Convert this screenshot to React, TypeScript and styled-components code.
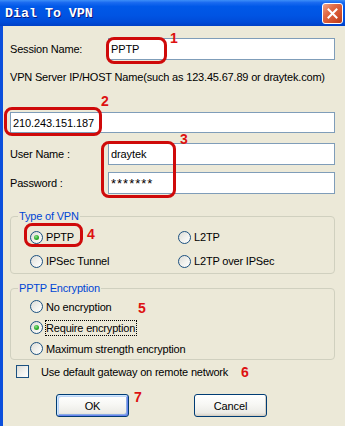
import React from 'react';
import styled, { createGlobalStyle } from 'styled-components';

const GlobalStyle = createGlobalStyle`
    html, body {
        margin: 0;
        padding: 0;
        background: #ece9d8;
    }
    body {
        font-family: 'Liberation Sans', Arial, sans-serif;
        font-size: 11px;
        letter-spacing: -0.18px;
        color: #000;
    }
`;

const Window = styled.div`
    position: relative;
    width: 345px;
    height: 426px;
    display: flex;
    flex-direction: column;
    background: #ece9d8;
    overflow: hidden;
`;

const TitleBar = styled.div`
    flex: none;
    height: 26px;
    box-sizing: border-box;
    padding: 0 2px 0 5px;
    display: flex;
    align-items: center;
    justify-content: space-between;
    background: linear-gradient(
        to bottom,
        #3d8ff8 0%,
        #1a6af0 10%,
        #0058e8 25%,
        #0054e3 60%,
        #004bd8 85%,
        #0040c6 100%
    );
`;

const Title = styled.span`
    font-family: 'Liberation Mono', 'DejaVu Sans Mono', monospace;
    font-weight: bold;
    font-size: 13.3px;
    color: #fff;
    text-shadow: 1px 1px #0a1883;
    letter-spacing: 0;
`;

const CloseButton = styled.div`
    width: 21px;
    height: 21px;
    box-sizing: border-box;
    border: 1px solid #fff;
    border-radius: 3px;
    background: linear-gradient(135deg, #f0a58a 0%, #e26a45 35%, #d2502b 70%, #b83a18 100%);
    display: flex;
    align-items: center;
    justify-content: center;
`;

const Body = styled.div`
    flex: 1;
    display: flex;
    flex-direction: column;
    border-left: 3px solid #0b4fdc;
    padding: 12px 10px 0 7px;
`;

const FieldRow = styled.div<{ $gap: number }>`
    display: flex;
    align-items: center;
    height: 22px;
    margin-top: ${(p) => p.$gap}px;
`;

const FieldLabel = styled.span`
    width: 98px;
    flex: none;
`;

const TextBox = styled.input<{ $h?: number; $masked?: boolean }>`
    flex: 1;
    min-width: 0;
    height: ${(p) => p.$h ?? 22}px;
    box-sizing: border-box;
    margin: 0;
    border: 1px solid #7f9db9;
    background: #fff;
    padding: 0 2px;
    font-family: 'Liberation Sans', Arial, sans-serif;
    font-size: ${(p) => (p.$masked ? 13 : 11)}px;
    letter-spacing: ${(p) => (p.$masked ? '1px' : '-0.1px')};
    color: #000;
    outline: none;
`;

const Hint = styled.div`
    margin-top: 11px;
    line-height: 13px;
`;

const ServerRow = styled.div`
    display: flex;
    margin-top: 28px;
`;

const Group = styled.fieldset<{ $gap: number }>`
    margin: ${(p) => p.$gap}px 0 0 0;
    padding: 0 0 0 7px;
    border: 1px solid #d0d0bf;
    border-radius: 4px;
    min-width: 0;
`;

const Legend = styled.legend`
    padding: 0 1px;
    line-height: 13px;
    color: #0046d5;
`;

const OptionGrid = styled.div<{ $row: number; $cols: string; $top: number }>`
    display: grid;
    grid-template-columns: ${(p) => p.$cols};
    grid-auto-rows: ${(p) => p.$row}px;
    padding: ${(p) => p.$top}px 0 0 12px;
`;

const Option = styled.label`
    display: flex;
    align-items: center;
    gap: 3px;
`;

const RadioCircle = styled.span<{ $on?: boolean }>`
    position: relative;
    flex: none;
    width: 13px;
    height: 13px;
    box-sizing: border-box;
    border-radius: 50%;
    border: 1px solid #1c5180;
    background: linear-gradient(135deg, #dcdcd7 0%, #f2f2ee 55%, #ffffff 100%);

    &::after {
        content: '';
        display: ${(p) => (p.$on ? 'block' : 'none')};
        position: absolute;
        left: 3px;
        top: 3px;
        width: 5px;
        height: 5px;
        border-radius: 50%;
        background: radial-gradient(circle at 40% 35%, #8fe08f 0%, #30b030 50%, #1a8a1a 100%);
    }
`;

const FocusText = styled.span`
    outline: 1px dotted #000;
    outline-offset: 0;
    padding: 1px 1px 1px 0;
`;

const CheckRow = styled.div`
    display: flex;
    align-items: center;
    gap: 12px;
    margin: 5px 0 0 6px;
    height: 13px;
`;

const CheckBox = styled.span`
    flex: none;
    width: 13px;
    height: 13px;
    box-sizing: border-box;
    border: 1px solid #1c5180;
    background: linear-gradient(135deg, #dcdcd7 0%, #f2f2ee 55%, #ffffff 100%);
`;

const ButtonRow = styled.div`
    display: flex;
    gap: 65px;
    margin-top: 16px;
    padding-left: 46px;
`;

const Button = styled.button<{ $default?: boolean }>`
    width: 73px;
    height: 23px;
    box-sizing: border-box;
    margin: 0;
    padding: 0;
    border: 1px solid #003c74;
    border-radius: 3px;
    font-family: 'Liberation Sans', Arial, sans-serif;
    font-size: 11px;
    letter-spacing: -0.1px;
    color: #000;
    background: linear-gradient(to bottom, #ffffff 0%, #f7f7f4 45%, #ecebe6 85%, #d6d0c5 100%);
    box-shadow: ${(p) =>
        p.$default
            ? 'inset 1px 1px 0 #cee7ff, inset -1px -1px 0 #6982ee, inset 2px 2px 0 #bcd4f6, inset -2px -2px 0 #89ade4'
            : 'inset -1px -1px 0 #d6d0c5'};
`;

const Mark = styled.div<{ $x: number; $y: number; $w: number; $h: number }>`
    position: absolute;
    left: ${(p) => p.$x}px;
    top: ${(p) => p.$y}px;
    width: ${(p) => p.$w}px;
    height: ${(p) => p.$h}px;
    box-sizing: border-box;
    border: 3px solid #cf0a0a;
    border-radius: 8px;
    pointer-events: none;
`;

const Step = styled.span<{ $x: number; $y: number }>`
    position: absolute;
    left: ${(p) => p.$x}px;
    top: ${(p) => p.$y}px;
    font-family: 'Liberation Sans', Arial, sans-serif;
    font-weight: bold;
    font-size: 14px;
    line-height: 14px;
    letter-spacing: 0;
    color: #dd1111;
`;

const marks = [
    { x: 106, y: 37, w: 61, h: 27 },
    { x: 4, y: 107, w: 98, h: 29 },
    { x: 101, y: 141, w: 75, h: 57 },
    { x: 24, y: 223, w: 59, h: 24 },
];

const steps = [
    { n: 1, x: 170, y: 31 },
    { n: 2, x: 101, y: 94 },
    { n: 3, x: 180, y: 132 },
    { n: 4, x: 87, y: 227 },
    { n: 5, x: 138, y: 301 },
    { n: 6, x: 241, y: 365 },
    { n: 7, x: 134, y: 390 },
];

function App() {
    return (
        <Window>
            <GlobalStyle />
            <TitleBar>
                <Title>Dial To VPN</Title>
                <CloseButton>
                    <svg width="11" height="11" viewBox="0 0 11 11">
                        <path d="M1.5 1.5 L9.5 9.5 M9.5 1.5 L1.5 9.5" stroke="#fff" strokeWidth="2" strokeLinecap="square" />
                    </svg>
                </CloseButton>
            </TitleBar>
            <Body>
                <FieldRow $gap={0}>
                    <FieldLabel>Session Name:</FieldLabel>
                    <TextBox defaultValue="PPTP" />
                </FieldRow>
                <Hint>VPN Server IP/HOST Name(such as 123.45.67.89 or draytek.com)</Hint>
                <ServerRow>
                    <TextBox $h={21} defaultValue="210.243.151.187" />
                </ServerRow>
                <FieldRow $gap={10}>
                    <FieldLabel>User Name :</FieldLabel>
                    <TextBox defaultValue="draytek" />
                </FieldRow>
                <FieldRow $gap={7}>
                    <FieldLabel>Password :</FieldLabel>
                    <TextBox $masked defaultValue="*******" />
                </FieldRow>

                <Group $gap={16}>
                    <Legend>Type of VPN</Legend>
                    <OptionGrid $row={24} $cols="148px auto" $top={2}>
                        <Option>
                            <RadioCircle $on />
                            PPTP
                        </Option>
                        <Option>
                            <RadioCircle />
                            L2TP
                        </Option>
                        <Option>
                            <RadioCircle />
                            IPSec Tunnel
                        </Option>
                        <Option>
                            <RadioCircle />
                            L2TP over IPSec
                        </Option>
                    </OptionGrid>
                </Group>

                <Group $gap={8}>
                    <Legend>PPTP Encryption</Legend>
                    <OptionGrid $row={21} $cols="auto" $top={1}>
                        <Option>
                            <RadioCircle />
                            No encryption
                        </Option>
                        <Option>
                            <RadioCircle $on />
                            <FocusText>Require encryption</FocusText>
                        </Option>
                        <Option>
                            <RadioCircle />
                            Maximum strength encryption
                        </Option>
                    </OptionGrid>
                </Group>

                <CheckRow>
                    <CheckBox />
                    <span>Use default gateway on remote network</span>
                </CheckRow>

                <ButtonRow>
                    <Button $default>OK</Button>
                    <Button>Cancel</Button>
                </ButtonRow>
            </Body>

            {marks.map((m, i) => (
                <Mark key={i} $x={m.x} $y={m.y} $w={m.w} $h={m.h} />
            ))}
            {steps.map((s) => (
                <Step key={s.n} $x={s.x} $y={s.y}>
                    {s.n}
                </Step>
            ))}
        </Window>
    );
}

export default App;
